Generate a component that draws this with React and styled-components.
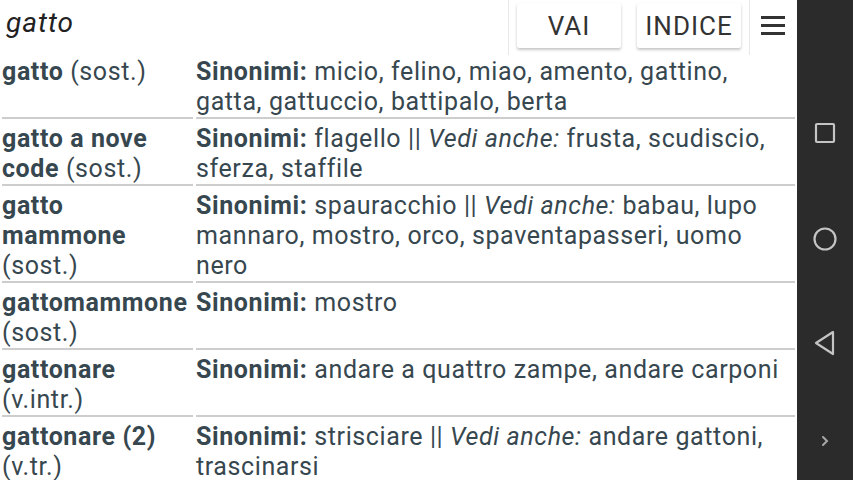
import React from 'react';
import styled, { createGlobalStyle } from 'styled-components';

const GlobalStyle = createGlobalStyle`
	body {
		margin: 0;
		font-family: Roboto, "Liberation Sans", sans-serif;
		background: #ffffff;
	}
`;

const Screen = styled.div`
	display: flex;
	width: 853px;
	height: 480px;
	overflow: hidden;
`;
const Main = styled.div`
	flex: 1;
	display: flex;
	flex-direction: column;
	background: #ffffff;
	min-width: 0;
`;
const Header = styled.div`
	display: flex;
	align-items: flex-start;
	height: 57px;
	flex-shrink: 0;
`;
const Title = styled.div`
	flex: 1;
	padding: 5px 0 0 6px;
	font-size: 28px;
	letter-spacing: 1px;
	font-style: italic;
	line-height: 36px;
	color: #212121;
`;
const Divider = styled.div`
	width: 1px;
	height: 55px;
	background: #e8e8e8;
	margin: ${p => p.$margin};
`;
const ActionButton = styled.button`
	width: 104px;
	height: 45px;
	margin: 3px ${p => p.$right}px 0 0;
	border: none;
	border-radius: 2px;
	background: #ffffff;
	box-shadow: 0 2px 3px rgba(0, 0, 0, 0.22), 0 0 1px rgba(0, 0, 0, 0.08);
	font-family: Roboto, "Liberation Sans", sans-serif;
	font-size: 26px;
	letter-spacing: 1px;
	color: #333333;
	text-transform: uppercase;
	padding: 0;
`;
const MenuButton = styled.div`
	display: flex;
	flex-direction: column;
	gap: 5px;
	width: 24px;
	margin: 16px 12px 0 11px;
	span {
		display: block;
		height: 3px;
		background: #333333;
	}
`;
const Table = styled.div`
	display: grid;
	grid-template-columns: 191px 1fr;
	column-gap: 3px;
	row-gap: 5px;
	padding: 0 2px;
	font-size: 25px;
	letter-spacing: 0.6px;
	line-height: 30px;
	color: #37474f;
`;
const Cell = styled.div`
	border-bottom: 2px solid #cdcdcd;
	white-space: ${p => (p.$term ? 'normal' : 'normal')};
`;
const Bold = styled.b`
	font-weight: 700;
`;
const NavBar = styled.div`
	width: 56px;
	background: #2b2b2b;
	display: flex;
	flex-direction: column;
	padding-top: 81px;
	box-sizing: border-box;
`;
const NavSlot = styled.div`
	height: ${p => p.$h}px;
	display: flex;
	align-items: center;
	justify-content: center;
	flex-shrink: 0;
`;

const rows = [
	{ term: 'gatto', pos: 'sost.', syn: 'micio, felino, miao, amento, gattino, gatta, gattuccio, battipalo, berta' },
	{ term: 'gatto a nove code', pos: 'sost.', syn: 'flagello', see: 'frusta, scudiscio, sferza, staffile' },
	{ term: 'gatto mammone', pos: 'sost.', syn: 'spauracchio', see: 'babau, lupo mannaro, mostro, orco, spaventapasseri, uomo nero' },
	{ term: 'gattomammone', pos: 'sost.', syn: 'mostro' },
	{ term: 'gattonare', pos: 'v.intr.', syn: 'andare a quattro zampe, andare carponi' },
	{ term: 'gattonare (2)', pos: 'v.tr.', syn: 'strisciare', see: 'andare gattoni, trascinarsi' },
];

const navIcon = { fill: 'none', stroke: '#c4c4c4', strokeWidth: 2.2 };

const App = () => {
	return (
		<Screen>
			<GlobalStyle />
			<Main>
				<Header>
					<Title>gatto</Title>
					<Divider $margin="0 8px 0 0" />
					<ActionButton $right={16}>Vai</ActionButton>
					<ActionButton $right={8}>Indice</ActionButton>
					<Divider $margin="0" />
					<MenuButton>
						<span />
						<span />
						<span />
					</MenuButton>
				</Header>
				<Table>
					{rows.map(row => (
						<React.Fragment key={row.term}>
							<Cell $term>
								<Bold>{row.term}</Bold> ({row.pos})
							</Cell>
							<Cell>
								<Bold>Sinonimi:</Bold> {row.syn}
								{row.see && (
									<>
										{' || '}
										<i>Vedi anche:</i> {row.see}
									</>
								)}
							</Cell>
						</React.Fragment>
					))}
				</Table>
			</Main>
			<NavBar>
				<NavSlot $h={104}>
					<svg width="24" height="24" viewBox="0 0 24 24">
						<rect x="3" y="3" width="18" height="18" rx="1" {...navIcon} />
					</svg>
				</NavSlot>
				<NavSlot $h={108}>
					<svg width="26" height="26" viewBox="0 0 26 26">
						<circle cx="13" cy="13" r="10.5" {...navIcon} />
					</svg>
				</NavSlot>
				<NavSlot $h={100}>
					<svg width="26" height="28" viewBox="0 0 26 28">
						<path d="M21 3 L4 14 L21 25 Z" strokeLinejoin="round" {...navIcon} />
					</svg>
				</NavSlot>
				<NavSlot $h={96}>
					<svg width="10" height="14" viewBox="0 0 10 14">
						<path d="M3 3 L7 7 L3 11" strokeLinecap="round" {...navIcon} stroke="#a8a8a8" strokeWidth="2" />
					</svg>
				</NavSlot>
			</NavBar>
		</Screen>
	);
};

export default App;
